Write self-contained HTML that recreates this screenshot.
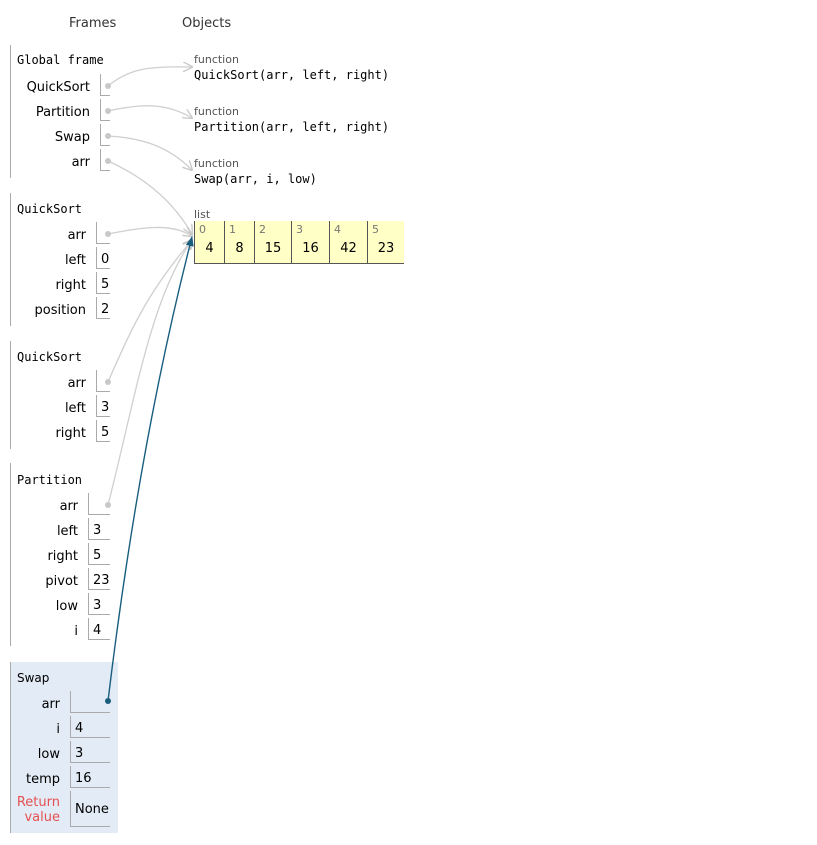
<!DOCTYPE html>
<html><head><meta charset="utf-8"><style>
body{margin:0;width:817px;height:845px;background:#fff;position:relative;font-family:"DejaVu Sans",Verdana,sans-serif;font-size:13px;color:#000;overflow:hidden}
.a{position:absolute;white-space:nowrap}
.t{transform:translateY(2px)}
.m{font-family:"DejaVu Sans Mono","Liberation Mono",monospace;font-size:12px}
.vl{position:absolute;left:10px;width:1px;background:#aaa}
.l{position:absolute;text-align:right;width:100px;line-height:16px;transform:translateY(2px)}
.b{position:absolute;border-left:1px solid #aaa;border-bottom:1px solid #aaa;height:22px;line-height:22px;padding-left:4px;padding-top:2px;box-sizing:border-box}
.sm{font-size:11px;color:#555}
.cell{position:absolute;top:221px;height:43px;border-left:1px solid #555;border-bottom:1px solid #555;background:#ffffc6;box-sizing:border-box}
.cell .i{position:absolute;left:4px;top:2px;font-size:11px;color:#777}
.cell .v{position:absolute;left:0;right:0;top:20px;text-align:center}
</style></head><body>
<div class="a t" style="left:69px;top:14px;color:#333">Frames</div>
<div class="a t" style="left:182px;top:14px;color:#333">Objects</div>

<!-- Global -->
<div class="vl" style="top:45px;height:133px"></div>
<div class="a m t" style="left:17px;top:51px">Global frame</div>
<div class="l" style="left:-10px;top:78px">QuickSort</div><div class="b" style="left:100px;top:74px;width:10px"></div>
<div class="l" style="left:-10px;top:103px">Partition</div><div class="b" style="left:100px;top:99px;width:10px"></div>
<div class="l" style="left:-10px;top:128px">Swap</div><div class="b" style="left:100px;top:124px;width:10px"></div>
<div class="l" style="left:-10px;top:153px">arr</div><div class="b" style="left:100px;top:149px;width:10px"></div>

<!-- QuickSort 1 -->
<div class="vl" style="top:193px;height:133px"></div>
<div class="a m t" style="left:17px;top:200px">QuickSort</div>
<div class="l" style="left:-14px;top:226px">arr</div><div class="b" style="left:96px;top:222px;width:14px"></div>
<div class="l" style="left:-14px;top:251px">left</div><div class="b" style="left:96px;top:247px;width:14px">0</div>
<div class="l" style="left:-14px;top:276px">right</div><div class="b" style="left:96px;top:272px;width:14px">5</div>
<div class="l" style="left:-14px;top:301px">position</div><div class="b" style="left:96px;top:297px;width:14px">2</div>

<!-- QuickSort 2 -->
<div class="vl" style="top:341px;height:108px"></div>
<div class="a m t" style="left:17px;top:348px">QuickSort</div>
<div class="l" style="left:-14px;top:374px">arr</div><div class="b" style="left:96px;top:370px;width:14px"></div>
<div class="l" style="left:-14px;top:399px">left</div><div class="b" style="left:96px;top:395px;width:14px">3</div>
<div class="l" style="left:-14px;top:424px">right</div><div class="b" style="left:96px;top:420px;width:14px">5</div>

<!-- Partition -->
<div class="vl" style="top:463px;height:183px"></div>
<div class="a m t" style="left:17px;top:471px">Partition</div>
<div class="l" style="left:-22px;top:497px">arr</div><div class="b" style="left:88px;top:493px;width:22px"></div>
<div class="l" style="left:-22px;top:522px">left</div><div class="b" style="left:88px;top:518px;width:22px">3</div>
<div class="l" style="left:-22px;top:547px">right</div><div class="b" style="left:88px;top:543px;width:22px">5</div>
<div class="l" style="left:-22px;top:572px">pivot</div><div class="b" style="left:88px;top:568px;width:22px">23</div>
<div class="l" style="left:-22px;top:597px">low</div><div class="b" style="left:88px;top:593px;width:22px">3</div>
<div class="l" style="left:-22px;top:622px">i</div><div class="b" style="left:88px;top:618px;width:22px">4</div>

<!-- Swap -->
<div class="a" style="left:10px;top:662px;width:108px;height:171px;background:#e2ebf6;border-left:1px solid #aaa;box-sizing:border-box"></div>
<div class="a t" style="left:17px;top:669px;font-size:12px">Swap</div>
<div class="l" style="left:-40px;top:695px">arr</div><div class="b" style="left:70px;top:691px;width:40px"></div>
<div class="l" style="left:-40px;top:720px">i</div><div class="b" style="left:70px;top:716px;width:40px">4</div>
<div class="l" style="left:-40px;top:745px">low</div><div class="b" style="left:70px;top:741px;width:40px">3</div>
<div class="l" style="left:-40px;top:770px">temp</div><div class="b" style="left:70px;top:766px;width:40px">16</div>
<div class="l" style="left:-40px;top:793px;color:#e55050;line-height:15px">Return<br>value</div><div class="b" style="left:70px;top:791px;width:40px;height:36px;line-height:34px">None</div>

<!-- Objects -->
<div class="a sm t" style="left:194px;top:51px">function</div>
<div class="a m t" style="left:194px;top:66px">QuickSort(arr, left, right)</div>
<div class="a sm t" style="left:194px;top:103px">function</div>
<div class="a m t" style="left:194px;top:118px">Partition(arr, left, right)</div>
<div class="a sm t" style="left:194px;top:155px">function</div>
<div class="a m t" style="left:194px;top:170px">Swap(arr, i, low)</div>
<div class="a sm t" style="left:194px;top:206px">list</div>
<div class="cell" style="left:194px;width:30px"><span class="i">0</span><span class="v">4</span></div>
<div class="cell" style="left:224px;width:30px"><span class="i">1</span><span class="v">8</span></div>
<div class="cell" style="left:254px;width:37px"><span class="i">2</span><span class="v">15</span></div>
<div class="cell" style="left:291px;width:38px"><span class="i">3</span><span class="v">16</span></div>
<div class="cell" style="left:329px;width:38px"><span class="i">4</span><span class="v">42</span></div>
<div class="cell" style="left:367px;width:37px"><span class="i">5</span><span class="v">23</span></div>

<svg class="a" style="left:0;top:0" width="817" height="845">
<defs>
<marker id="g" markerWidth="10" markerHeight="10" refX="9" refY="5" orient="auto" markerUnits="userSpaceOnUse"><path d="M0,0 L10,5 L0,10" fill="none" stroke="#c8c8c8" stroke-width="1.3"/></marker>
<marker id="bl" markerWidth="10" markerHeight="10" refX="9" refY="5" orient="auto" markerUnits="userSpaceOnUse"><path d="M0,1 L10,5 L0,9 Z" fill="#1a5e7e"/></marker>
</defs>
<g fill="none" stroke="#cfcfcf" stroke-width="1.3">
<path d="M108,86 C130,68 150,66 192,67" marker-end="url(#g)"/>
<path d="M108,111 C140,104 165,102 192,118" marker-end="url(#g)"/>
<path d="M108,136 C145,138 170,148 192,170" marker-end="url(#g)"/>
<path d="M108,161 C150,180 175,205 192,234" marker-end="url(#g)"/>
<path d="M108,234 C140,228 170,222 192,236" marker-end="url(#g)"/>
<path d="M108,382 C135,320 150,290 192,240" marker-end="url(#g)"/>
<path d="M108,505 C135,400 150,300 192,240" marker-end="url(#g)"/>
</g>
<g fill="#c8c8c8"><circle cx="108" cy="86" r="3"/><circle cx="108" cy="111" r="3"/><circle cx="108" cy="136" r="3"/><circle cx="108" cy="161" r="3"/><circle cx="108" cy="234" r="3"/><circle cx="108" cy="382" r="3"/><circle cx="108" cy="505" r="3"/></g>
<path d="M108,701 C125,560 150,400 192,237" fill="none" stroke="#1a5e7e" stroke-width="1.4" marker-end="url(#bl)"/>
<circle cx="108" cy="701" r="3" fill="#1a5e7e"/>
</svg>
</body></html>
